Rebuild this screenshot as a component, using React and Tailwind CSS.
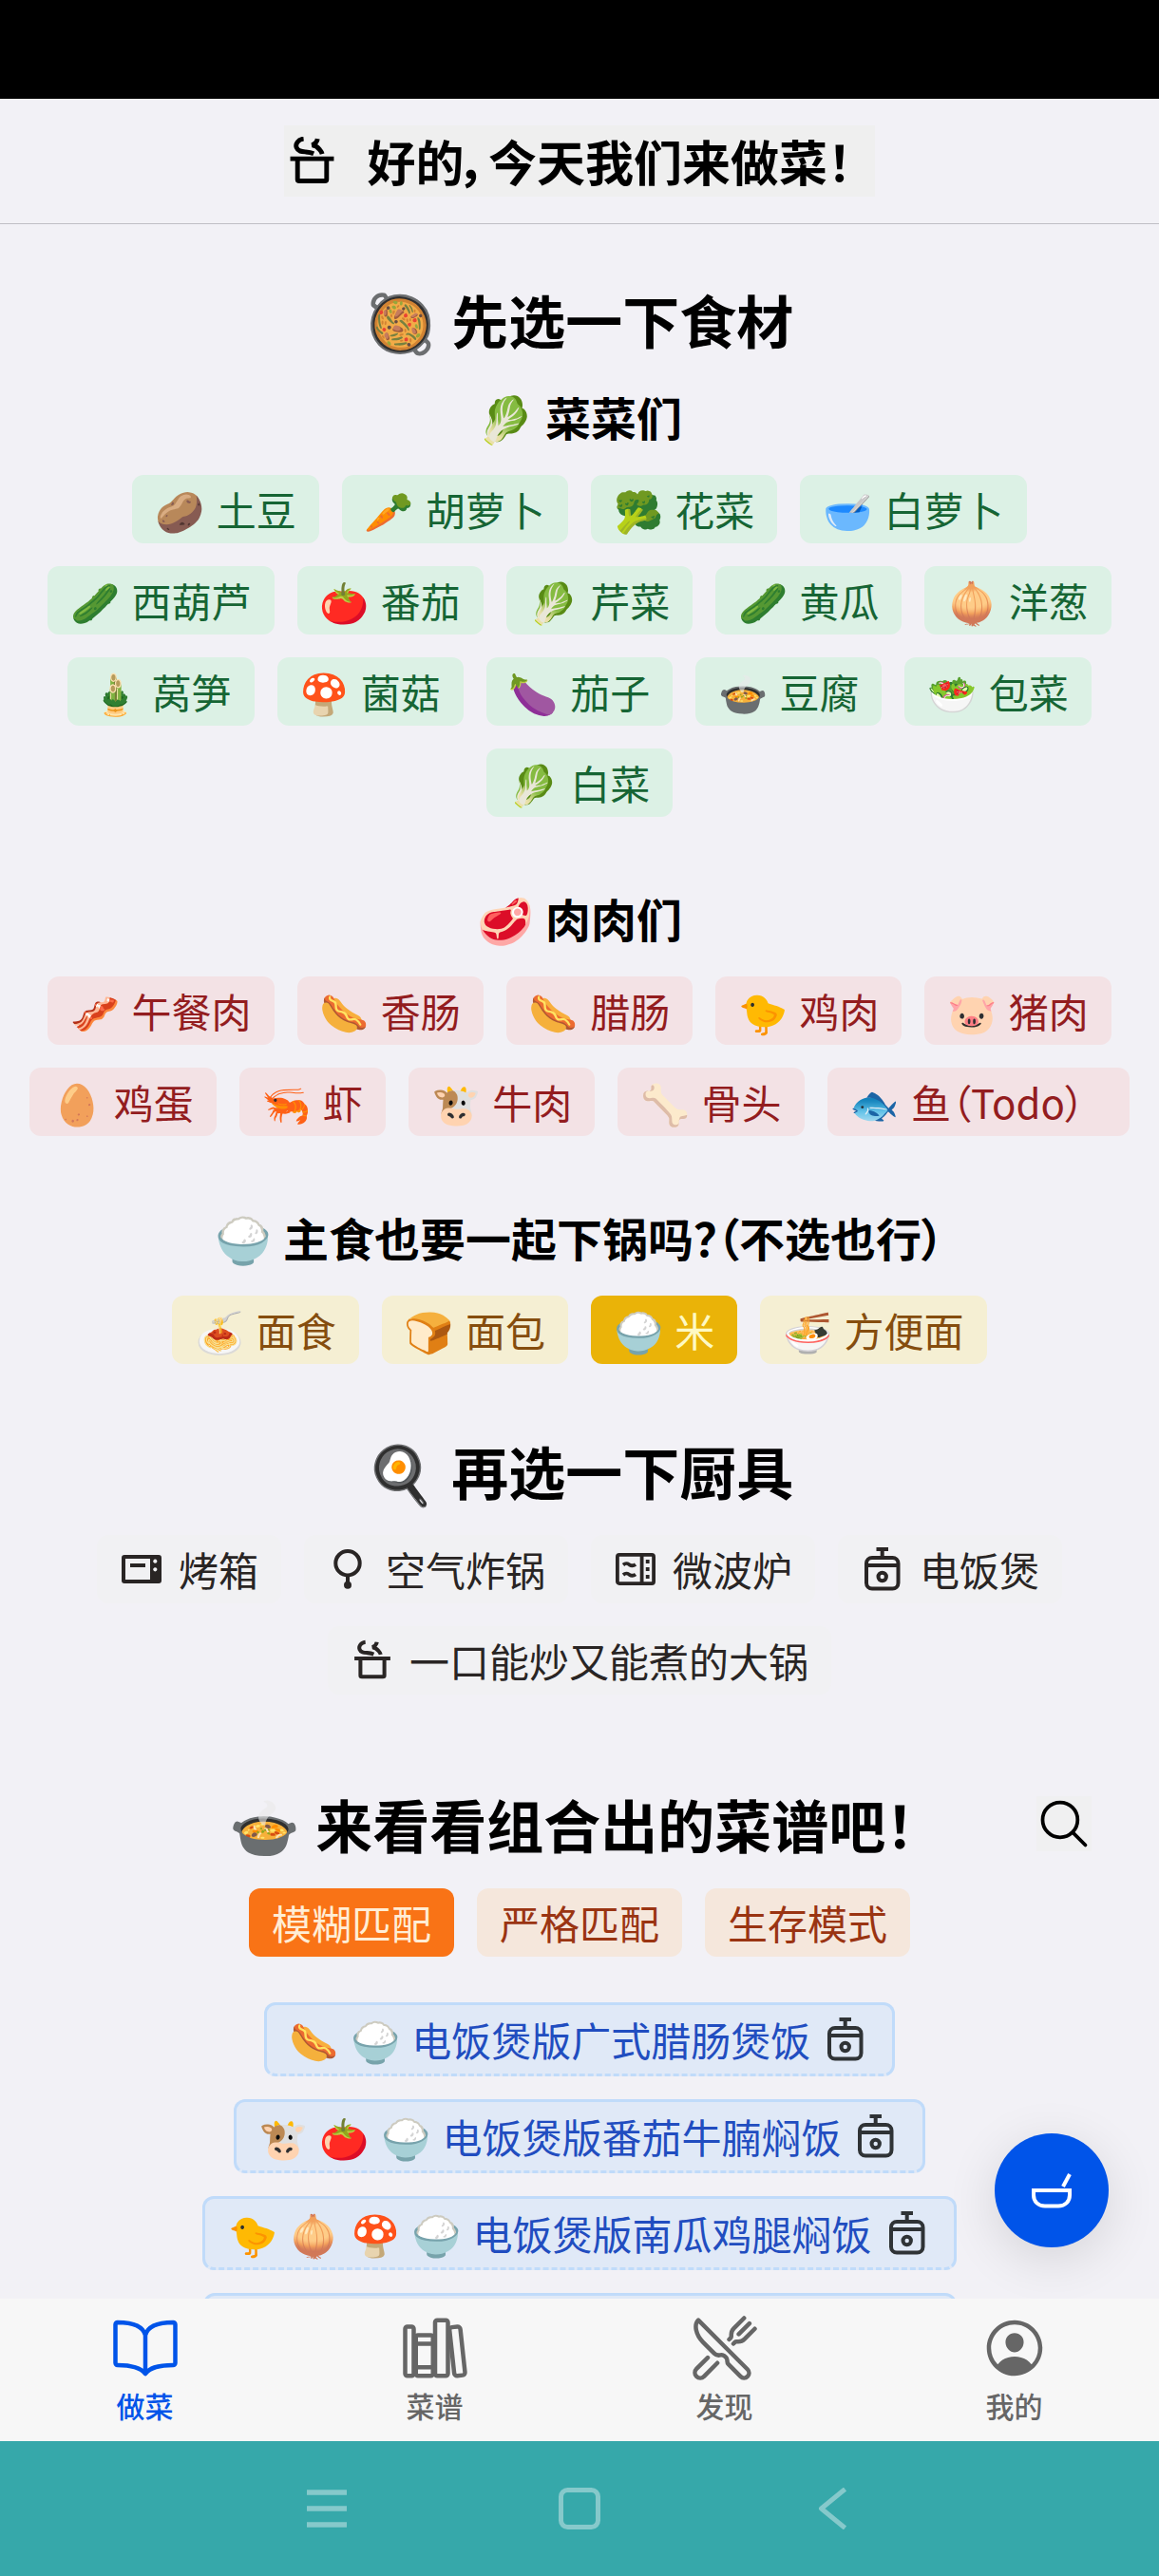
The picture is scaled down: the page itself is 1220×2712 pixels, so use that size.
import React, { useState } from 'react';
import {
  IoBookOutline,
  IoLibraryOutline,
  IoRestaurantOutline,
  IoPersonCircleOutline,
  IoSearchOutline,
} from 'react-icons/io5';

const vegetables = [
  { emoji: '🥔', name: '土豆' },
  { emoji: '🥕', name: '胡萝卜' },
  { emoji: '🥦', name: '花菜' },
  { emoji: '🥣', name: '白萝卜' },
  { emoji: '🥒', name: '西葫芦' },
  { emoji: '🍅', name: '番茄' },
  { emoji: '🥬', name: '芹菜' },
  { emoji: '🥒', name: '黄瓜' },
  { emoji: '🧅', name: '洋葱' },
  { emoji: '🎍', name: '莴笋' },
  { emoji: '🍄', name: '菌菇' },
  { emoji: '🍆', name: '茄子' },
  { emoji: '🍲', name: '豆腐' },
  { emoji: '🥗', name: '包菜' },
  { emoji: '🥬', name: '白菜' },
];

const meats = [
  { emoji: '🥓', name: '午餐肉' },
  { emoji: '🌭', name: '香肠' },
  { emoji: '🌭', name: '腊肠' },
  { emoji: '🐤', name: '鸡肉' },
  { emoji: '🐷', name: '猪肉' },
  { emoji: '🥚', name: '鸡蛋' },
  { emoji: '🦐', name: '虾' },
  { emoji: '🐮', name: '牛肉' },
  { emoji: '🦴', name: '骨头' },
  { emoji: '🐟', name: '鱼（Todo）', width: 'min-w-[318px]' },
];

const staples = [
  { emoji: '🍝', name: '面食' },
  { emoji: '🍞', name: '面包' },
  { emoji: '🍚', name: '米' },
  { emoji: '🍜', name: '方便面' },
];

const modes = ['模糊匹配', '严格匹配', '生存模式'];

const recipes = [
  { emojis: ['🌭', '🍚'], name: '电饭煲版广式腊肠煲饭' },
  { emojis: ['🐮', '🍅', '🍚'], name: '电饭煲版番茄牛腩焖饭' },
  { emojis: ['🐤', '🧅', '🍄', '🍚'], name: '电饭煲版南瓜鸡腿焖饭' },
];

const colors = {
  green: { normal: 'bg-[#dcf1e5] text-[#166534]', active: 'bg-green-500 text-green-100' },
  red: { normal: 'bg-[#f3e2e5] text-[#931d1f]', active: 'bg-red-500 text-red-100' },
  yellow: { normal: 'bg-[#f5efd3] text-[#854d0e]', active: 'bg-[#eab308] text-[#fef9c3]' },
};

const PotIcon = ({ className }) => (
  <svg viewBox="0 0 24 24" className={className} fill="none" stroke="currentColor" strokeWidth="2.3">
    <path d="M1.2 10.9h21.6" />
    <path d="M4.8 11v10.2q0 .7.9.7h12.6q.9 0 .9-.7V11" />
    <path d="M7.8 1C5 1.3 3.6 3.6 4.3 5.4c.8 2 2.6 2 4.6 2.1 1.5.1 2.7.3 3.9.8" />
    <path d="M14.7 1c-.2 1.5-1.3 2.5-2.7 3.1 1.6.1 2.9 1.2 3.8 2.300.6.7 1 1.3 1.2 2.1" />
  </svg>
);

const RiceCookerIcon = ({ className }) => (
  <svg viewBox="-2 0 42 46" className={className} fill="none" stroke="currentColor" strokeWidth="4">
    <path d="M12.5 2h12.5M18.7 2v9" />
    <rect x="2" y="11" width="33.5" height="32.5" rx="6" />
    <path d="M2 19h33.5" />
    <circle cx="18.7" cy="31" r="4.2" />
  </svg>
);

const OvenIcon = ({ className }) => (
  <svg viewBox="0 0 42 42" className={className}>
    <path
      fill="currentColor"
      fillRule="evenodd"
      d="M3 6h36a3 3 0 0 1 3 3v24a3 3 0 0 1-3 3H3a3 3 0 0 1-3-3V9a3 3 0 0 1 3-3zM4 10v22h26V10zM35.3 10.6a2.1 2.1 0 1 0 .01 0zM35.3 19.2a2.1 2.1 0 1 0 .01 0z"
    />
    <path fill="currentColor" d="M9 15h16v4H9z" />
  </svg>
);

const AirFryerIcon = ({ className }) => (
  <svg viewBox="0 0 42 42" className={className} fill="none" stroke="currentColor" strokeWidth="4">
    <circle cx="20" cy="14.7" r="12.7" />
    <path d="M20 27v8" />
    <circle cx="20" cy="37.7" r="4" fill="currentColor" stroke="none" />
  </svg>
);

const MicrowaveIcon = ({ className }) => (
  <svg viewBox="0 0 42 42" className={className} fill="none" stroke="currentColor" strokeWidth="3.8">
    <rect x="1.9" y="5.9" width="38.2" height="30.2" rx="2" />
    <path d="M27.6 6v30" />
    <path d="M8 16.5c3-2.5 4.5-1.5 6.5-.2s4 1.6 6.5-.3M8 27c3-2.5 4.5-1.5 6.5-.2s4 1.6 6.5-.3" />
    <path d="M33.7 11v4M33.7 19v4M33.7 27v4" />
  </svg>
);

const BowlIcon = ({ className }) => (
  <svg viewBox="0 0 42 37" className={className} fill="none" stroke="currentColor" strokeWidth="4">
    <path d="M2 18h38v5c0 7-5 11.5-12 11.5H14C7 34.5 2 30 2 23z" />
    <path d="M33 14l7-13" />
  </svg>
);

const tools = [
  { Icon: OvenIcon, name: '烤箱' },
  { Icon: AirFryerIcon, name: '空气炸锅' },
  { Icon: MicrowaveIcon, name: '微波炉' },
  { Icon: RiceCookerIcon, name: '电饭煲' },
  { Icon: PotIcon, name: '一口能炒又能煮的大锅' },
];

const tabs = [
  { Icon: IoBookOutline, name: '做菜' },
  { Icon: IoLibraryOutline, name: '菜谱' },
  { Icon: IoRestaurantOutline, name: '发现' },
  { Icon: IoPersonCircleOutline, name: '我的' },
];

const Title = ({ emoji, children }) => (
  <h2 className="flex items-center justify-center gap-4 text-[60px] leading-[84px] font-bold">
    <span>{emoji}</span>
    <span>{children}</span>
  </h2>
);

const Subtitle = ({ emoji, children }) => (
  <h3 className="flex items-center justify-center gap-3 text-[48px] leading-[72px] font-bold">
    <span>{emoji}</span>
    <span>{children}</span>
  </h3>
);

const ChipGroup = ({ items, color, selected, onToggle }) => (
  <div className="flex flex-wrap justify-center gap-6 px-6">
    {items.map((item) => (
      <button
        key={item.name}
        type="button"
        aria-pressed={selected.includes(item.name)}
        onClick={() => onToggle(item.name)}
        className={`flex items-center gap-3 rounded-xl px-6 py-1.5 ${item.width || ''} ${
          selected.includes(item.name) ? colors[color].active : colors[color].normal
        }`}
      >
        <span>{item.emoji}</span>
        <span>{item.name}</span>
      </button>
    ))}
  </div>
);

export default function App() {
  const [selected, setSelected] = useState(['米']);
  const [mode, setMode] = useState('模糊匹配');
  const [tab, setTab] = useState('做菜');

  const toggle = (name) => {
    setSelected((prev) => (prev.includes(name) ? prev.filter((n) => n !== name) : [...prev, name]));
  };

  return (
    <div className="flex h-screen flex-col bg-[#f2f1f6] font-['Noto_Sans_CJK_SC','Noto_Color_Emoji',sans-serif] text-[42px] leading-[60px] text-black [font-feature-settings:'palt']">
      {/* Status bar */}
      <div className="h-[104px] shrink-0 bg-black" />

      <header className="flex h-[132px] shrink-0 items-center justify-center border-b border-[#c0bfc5]">
        <button type="button" className="flex items-center gap-8 bg-[#efefef] pr-6 pl-1 text-[51px] leading-[75px] font-bold">
          <PotIcon className="size-[51px]" />
          <span>好的，今天我们来做菜！</span>
        </button>
      </header>

      <main className="relative min-h-0 flex-1 overflow-hidden">
        <section className="pt-[58px]">
          <Title emoji="🥘">先选一下食材</Title>
          <div className="pt-6">
            <Subtitle emoji="🥬">菜菜们</Subtitle>
            <div className="pt-[26px]">
              <ChipGroup items={vegetables} color="green" selected={selected} onToggle={toggle} />
            </div>
          </div>
          <div className="pt-[70px]">
            <Subtitle emoji="🥩">肉肉们</Subtitle>
            <div className="pt-[26px]">
              <ChipGroup items={meats} color="red" selected={selected} onToggle={toggle} />
            </div>
          </div>
          <div className="pt-[70px]">
            <Subtitle emoji="🍚">主食也要一起下锅吗？（不选也行）</Subtitle>
            <div className="pt-[26px]">
              <ChipGroup items={staples} color="yellow" selected={selected} onToggle={toggle} />
            </div>
          </div>
        </section>

        <section className="pt-[70px]">
          <Title emoji="🍳">再选一下厨具</Title>
          <div className="flex flex-wrap justify-center gap-6 px-6 pt-[26px]">
            {tools.map(({ Icon, name }) => (
              <button
                key={name}
                type="button"
                className="flex items-center gap-4 rounded-xl bg-[#f1f1f3] px-6 py-1.5 text-[#292524]"
              >
                <Icon className="mx-0.5 h-[46px] w-[42px]" />
                <span>{name}</span>
              </button>
            ))}
          </div>
        </section>

        <section className="pt-[94px]">
          <div className="grid grid-cols-[1fr_auto_1fr] items-center px-[71px]">
            <span />
            <div className="pr-4">
              <Title emoji="🍲">来看看组合出的菜谱吧！</Title>
            </div>
            <button
              type="button"
              aria-label="搜索"
              className="flex size-[58px] items-center justify-center justify-self-end bg-[#f0f0f1]"
            >
              <IoSearchOutline className="size-[60px] shrink-0" />
            </button>
          </div>
          <div className="flex flex-wrap justify-center gap-6 pt-[26px]">
            {modes.map((name) => (
              <button
                key={name}
                type="button"
                aria-pressed={mode === name}
                onClick={() => setMode(name)}
                className={`rounded-xl px-6 py-1.5 ${
                  mode === name ? 'bg-[#f97316] text-[#ffedd5]' : 'bg-[#f5e7dc] text-[#9a3412]'
                }`}
              >
                {name}
              </button>
            ))}
          </div>
          <div className="flex flex-col items-center gap-6 pt-12">
            {recipes.map((recipe) => (
              <a
                key={recipe.name}
                href="#"
                className="flex items-center gap-3 rounded-xl border-3 border-[#c0dbfa] bg-[#e0e9f7] px-6 py-1.5 text-[#214dc0] [border-bottom-style:dashed]"
              >
                {recipe.emojis.map((emoji) => (
                  <span key={emoji}>{emoji}</span>
                ))}
                <span>{recipe.name}</span>
                <RiceCookerIcon className="mx-1 h-[46px] w-[42px] text-[#2f3336]" />
              </a>
            ))}
            <div className="h-[78px] w-[65%] rounded-xl border-3 border-[#c0dbfa] bg-[#e0e9f7]" />
          </div>
        </section>

        <button
          type="button"
          aria-label="随机选择"
          className="absolute right-[53px] bottom-[54px] flex size-[120px] items-center justify-center rounded-full bg-[#0054e9] text-white shadow-[0_12px_54px_rgba(0,0,0,0.12)]"
        >
          <BowlIcon className="h-[37px] w-[42px]" />
        </button>
      </main>

      <nav className="grid h-[150px] shrink-0 grid-cols-4 bg-[#f7f7f7] text-[30px] leading-[40px] font-medium">
        {tabs.map(({ Icon, name }) => (
          <button
            key={name}
            type="button"
            onClick={() => setTab(name)}
            className={`flex flex-col items-center gap-1 pt-4 ${tab === name ? 'text-[#0054e9]' : 'text-[#666666]'}`}
          >
            <Icon className="size-[72px]" />
            <span>{name}</span>
          </button>
        ))}
      </nav>

      {/* Android navigation keys */}
      <div className="flex h-[142px] shrink-0 items-center justify-center gap-[222px] bg-[#36a8aa] text-[#86c9cb]">
        <button type="button" aria-label="菜单">
          <svg viewBox="0 0 44 44" className="size-11" stroke="currentColor" strokeWidth="5.5">
            <path d="M1 5h42M1 22h42M1 39h42" />
          </svg>
        </button>
        <button type="button" aria-label="主页">
          <svg viewBox="0 0 44 44" className="size-11" fill="none" stroke="currentColor" strokeWidth="5">
            <rect x="2.5" y="2.5" width="39" height="39" rx="7" />
          </svg>
        </button>
        <button type="button" aria-label="返回">
          <svg viewBox="0 0 44 44" className="size-11" fill="none" stroke="currentColor" strokeWidth="5" strokeLinejoin="round">
            <path d="M35.5 1.5L10.5 22l25 20.5" />
          </svg>
        </button>
      </div>
    </div>
  );
}
